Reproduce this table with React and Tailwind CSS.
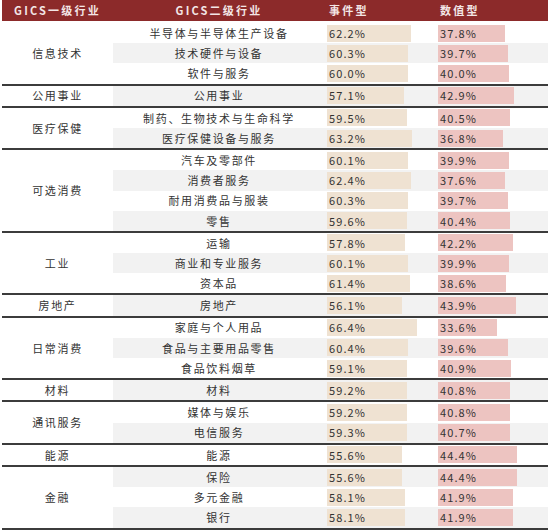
import React from "react";

// GICS 行业表：事件型 / 数值型 占比，带数据条
const GROUPS = [
  { name: "信息技术", rows: [["半导体与半导体生产设备", 62.2, 37.8], ["技术硬件与设备", 60.3, 39.7], ["软件与服务", 60.0, 40.0]] },
  { name: "公用事业", rows: [["公用事业", 57.1, 42.9]] },
  { name: "医疗保健", rows: [["制药、生物技术与生命科学", 59.5, 40.5], ["医疗保健设备与服务", 63.2, 36.8]] },
  { name: "可选消费", rows: [["汽车及零部件", 60.1, 39.9], ["消费者服务", 62.4, 37.6], ["耐用消费品与服装", 60.3, 39.7], ["零售", 59.6, 40.4]] },
  { name: "工业", rows: [["运输", 57.8, 42.2], ["商业和专业服务", 60.1, 39.9], ["资本品", 61.4, 38.6]] },
  { name: "房地产", rows: [["房地产", 56.1, 43.9]] },
  { name: "日常消费", rows: [["家庭与个人用品", 66.4, 33.6], ["食品与主要用品零售", 60.4, 39.6], ["食品饮料烟草", 59.1, 40.9]] },
  { name: "材料", rows: [["材料", 59.2, 40.8]] },
  { name: "通讯服务", rows: [["媒体与娱乐", 59.2, 40.8], ["电信服务", 59.3, 40.7]] },
  { name: "能源", rows: [["能源", 55.6, 44.4]] },
  { name: "金融", rows: [["保险", 55.6, 44.4], ["多元金融", 58.1, 41.9], ["银行", 58.1, 41.9]] },
];

const font = { fontFamily: '"Noto Sans CJK SC", "Noto Sans", sans-serif' };

function Bar({ value, color, scale, offset }) {
  return (
    <div className="flex h-full items-center pl-[2px]">
      <div
        className={`flex h-[17px] items-center pl-[2px] ${color}`}
        style={{ width: value * scale + offset }}
      >
        <span className="whitespace-nowrap text-[11px] tracking-[0.1em] text-[#333]">
          {value.toFixed(1)}%
        </span>
      </div>
    </div>
  );
}

export default function App() {
  let idx = 0;
  return (
    <div className="w-[550px] bg-white pl-[2px] pt-0" style={font}>
      <div className="w-[546px]">
        {/* header */}
        <div className="grid h-[21px] grid-cols-[111px_212px_111px_112px] items-center bg-[#8c2a2a] text-[11px] font-bold tracking-[0.2em] text-[#f3e6e6]">
          <div className="text-center">GICS一级行业</div>
          <div className="text-center">GICS二级行业</div>
          <div className="pl-[4px]">事件型</div>
          <div className="pl-[4px]">数值型</div>
        </div>
        <div className="h-[2px]" />
        {GROUPS.map((g, gi) => (
          <div
            key={g.name}
            className={`flex ${gi > 0 ? "border-t-2 border-[#3c3c3c]" : ""}`}
          >
            <div className="flex w-[111px] shrink-0 items-center justify-center text-[11px] tracking-[0.15em] text-[#333]">
              {g.name}
            </div>
            <div className="flex-1">
              {g.rows.map(([sub, a, b]) => {
                const gray = idx++ % 2 === 1;
                return (
                  <div
                    key={sub}
                    className={`grid h-[20.2px] grid-cols-[212px_111px_112px] ${gray ? "bg-[#f2f2f2]" : "bg-white"}`}
                  >
                    <div className="flex items-center justify-center whitespace-nowrap text-[11px] tracking-[0.15em] text-[#333]">
                      {sub}
                    </div>
                    <Bar value={a} color="bg-[#efe2d2]" scale={1.39} offset={-2.5} />
                    <Bar value={b} color="bg-[#edc4c1]" scale={1.85} offset={-3} />
                  </div>
                );
              })}
            </div>
          </div>
        ))}
        <div className="border-t-2 border-[#3c3c3c]" />
      </div>
    </div>
  );
}
